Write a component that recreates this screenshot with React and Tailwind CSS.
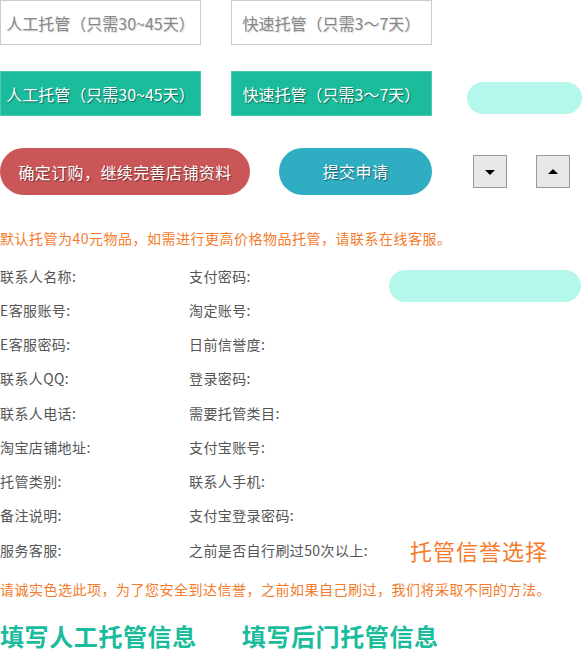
import React from 'react';

const font = "font-['Noto_Sans_CJK_SC','Noto_Sans',sans-serif]";

const leftLabels = ['联系人名称:', 'E客服账号:', 'E客服密码:', '联系人QQ:', '联系人电话:', '淘宝店铺地址:', '托管类别:', '备注说明:', '服务客服:'];
const rightLabels = ['支付密码:', '淘定账号:', '日前信誉度:', '登录密码:', '需要托管类目:', '支付宝账号:', '联系人手机:', '支付宝登录密码:', '之前是否自行刷过50次以上:'];

const App = () => {
  return (
    <div className={`w-[582px] bg-white ${font}`}>
      {/* outline tabs */}
      <div className="flex">
        <div className="w-[201px] h-[45px] border border-[#cccccc] flex items-center justify-center text-[16px] text-[#888888] [text-shadow:1px_1px_1px_rgba(0,0,0,0.15)]">
          人工托管（只需30~45天）
        </div>
        <div className="ml-[30px] w-[201px] h-[45px] border border-[#cccccc] flex items-center justify-center text-[16px] text-[#888888] [text-shadow:1px_1px_1px_rgba(0,0,0,0.15)]">
          快速托管（只需3～7天）
        </div>
      </div>

      {/* filled tabs */}
      <div className="flex items-start mt-[26px]">
        <div className="w-[201px] h-[45px] bg-[#1abc9c] border border-[#48c9b0] flex items-center justify-center text-[16px] text-white [text-shadow:1px_1px_1px_rgba(0,0,0,0.45)]">
          人工托管（只需30~45天）
        </div>
        <div className="ml-[30px] w-[201px] h-[45px] bg-[#1abc9c] border border-[#48c9b0] flex items-center justify-center text-[16px] text-white [text-shadow:1px_1px_1px_rgba(0,0,0,0.45)]">
          快速托管（只需3～7天）
        </div>
        <div className="ml-[35px] mt-[11px] w-[115px] h-[32px] rounded-[16px] bg-[#b4f8eb]" />
      </div>

      {/* action buttons */}
      <div className="flex items-center mt-[31px] h-[48px]">
        <button className="w-[250px] h-[47px] rounded-[24px] bg-[#cb5658] text-white text-[16px] tracking-[0.4px] [text-shadow:1px_1px_1px_rgba(0,0,0,0.45)] mt-[1px]">
          确定订购，继续完善店铺资料
        </button>
        <button className="ml-[29px] w-[153px] h-[47px] rounded-[24px] bg-[#2eadc3] text-white text-[16px] tracking-[0.4px] [text-shadow:1px_1px_1px_rgba(0,0,0,0.45)]">
          提交申请
        </button>
        <button className="ml-[41px] w-[34px] h-[33px] bg-[#e8e8e8] border border-[#999999] flex items-center justify-center mt-[1px]">
          <span className="w-0 h-0 border-l-[5px] border-r-[5px] border-t-[5px] border-l-transparent border-r-transparent border-t-black mt-[1px]" />
        </button>
        <button className="ml-[29px] w-[34px] h-[33px] bg-[#e8e8e8] border border-[#999999] flex items-center justify-center mt-[1px]">
          <span className="w-0 h-0 border-l-[5px] border-r-[5px] border-b-[5px] border-l-transparent border-r-transparent border-b-black -mt-[1px]" />
        </button>
      </div>

      <p className="mt-[33px] text-[14px] leading-[20px] tracking-[0.5px] text-[#f47b2b] whitespace-nowrap">
        默认托管为40元物品，如需进行更高价格物品托管，请联系在线客服。
      </p>

      {/* form labels */}
      <div className="flex mt-[11px]">
        <div className="w-[389px] shrink-0">
          {leftLabels.map((label, i) => (
            <div key={label} className="flex items-center h-[34.25px] text-[14px] tracking-[0.4px] text-[#555555] whitespace-nowrap">
              <span className="w-[189px] shrink-0">{label}</span>
              <span>{rightLabels[i]}</span>
              {i === leftLabels.length - 1 && (
                <span className="ml-[42px] text-[22px] text-[#f47b2b] tracking-[1px]">托管信誉选择</span>
              )}
            </div>
          ))}
        </div>
        <div className="mt-[11px] w-[192px] h-[32px] rounded-[16px] bg-[#b4f8eb]" />
      </div>

      <p className="mt-[12px] text-[14px] leading-[20px] tracking-[0.5px] text-[#f47b2b] whitespace-nowrap">
        请诚实色选此项，为了您安全到达信誉，之前如果自己刷过，我们将采取不同的方法。
      </p>

      <div className="flex mt-[24px] text-[24px] leading-[26px] tracking-[0.6px] font-bold text-[#1abc9c] whitespace-nowrap">
        <span>填写人工托管信息</span>
        <span className="ml-[45px]">填写后门托管信息</span>
      </div>
    </div>
  );
};

export default App;
